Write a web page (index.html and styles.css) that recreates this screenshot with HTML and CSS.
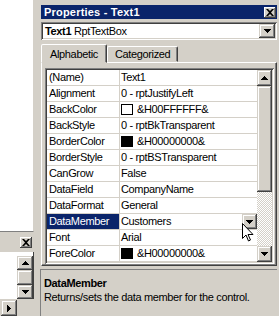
FILE: index.html
```html
<!DOCTYPE html>
<html lang="en">
<head>
    <meta charset="UTF-8">
    <title>Properties - Text1</title>
    <link rel="stylesheet" href="styles.css">
</head>
<body>
<div class="desk">
    <div class="side">
        <div class="side__pane"></div>
        <div class="side__bar">
            <span class="cap-btn">
                <svg width="8" height="7" viewBox="0 0 8 7"><path d="M0 0h2l2 2 2-2h2L5 3.5 8 7H6L4 5 2 7H0l3-3.5z"/></svg>
            </span>
        </div>
        <div class="side__list">
            <div class="side__white"></div>
            <div class="mini-scroll">
                <span class="sbtn sbtn--short">
                    <svg width="7" height="4" viewBox="0 0 7 4"><path d="M3 0h1v1h1v1h1v1h1v1H0V3h1V2h1V1h1z"/></svg>
                </span>
                <span class="sbtn sbtn--thumb"></span>
                <span class="sbtn sbtn--short">
                    <svg width="7" height="4" viewBox="0 0 7 4"><path d="M0 0h7v1H6v1H5v1H4v1H3V3H2V2H1V1H0z"/></svg>
                </span>
            </div>
        </div>
        <div class="side__foot">
            <span class="sbtn sbtn--side">
                <svg width="4" height="7" viewBox="0 0 4 7"><path d="M0 0h1v1h1v1h1v1h1v1H3v1H2v1H1v1H0z"/></svg>
            </span>
        </div>
    </div>

    <div class="props">
        <div class="props__title">
            <span>Properties - Text1</span>
            <span class="cap-btn">
                <svg width="8" height="7" viewBox="0 0 8 7"><path d="M0 0h2l2 2 2-2h2L5 3.5 8 7H6L4 5 2 7H0l3-3.5z"/></svg>
            </span>
        </div>

        <div class="props__combo">
            <span><b>Text1</b> RptTextBox</span>
            <span class="sbtn sbtn--drop">
                <svg width="7" height="4" viewBox="0 0 7 4"><path d="M0 0h7v1H6v1H5v1H4v1H3V3H2V2H1V1H0z"/></svg>
            </span>
        </div>

        <div class="props__tabs">
            <span class="tab is-active">Alphabetic</span>
            <span class="tab">Categorized</span>
        </div>

        <div class="props__page">
            <div class="grid">
                <div class="grid__rows">
                    <div class="row"><span class="row__name">(Name)</span><span class="row__value">Text1</span></div>
                    <div class="row"><span class="row__name">Alignment</span><span class="row__value">0 - rptJustifyLeft</span></div>
                    <div class="row"><span class="row__name">BackColor</span><span class="row__value"><i class="swatch"></i>&amp;H00FFFFFF&amp;</span></div>
                    <div class="row"><span class="row__name">BackStyle</span><span class="row__value">0 - rptBkTransparent</span></div>
                    <div class="row"><span class="row__name">BorderColor</span><span class="row__value"><i class="swatch swatch--black"></i>&amp;H00000000&amp;</span></div>
                    <div class="row"><span class="row__name">BorderStyle</span><span class="row__value">0 - rptBSTransparent</span></div>
                    <div class="row"><span class="row__name">CanGrow</span><span class="row__value">False</span></div>
                    <div class="row"><span class="row__name">DataField</span><span class="row__value">CompanyName</span></div>
                    <div class="row"><span class="row__name">DataFormat</span><span class="row__value">General</span></div>
                    <div class="row is-selected">
                        <span class="row__name">DataMember</span>
                        <span class="row__value">Customers
                            <span class="sbtn sbtn--cell">
                                <svg width="7" height="4" viewBox="0 0 7 4"><path d="M0 0h7v1H6v1H5v1H4v1H3V3H2V2H1V1H0z"/></svg>
                            </span>
                        </span>
                    </div>
                    <div class="row"><span class="row__name">Font</span><span class="row__value">Arial</span></div>
                    <div class="row"><span class="row__name">ForeColor</span><span class="row__value"><i class="swatch swatch--black"></i>&amp;H00000000&amp;</span></div>
                </div>
                <div class="grid__scroll">
                    <span class="sbtn sbtn--arrow">
                        <svg width="7" height="4" viewBox="0 0 7 4"><path d="M3 0h1v1h1v1h1v1h1v1H0V3h1V2h1V1h1z"/></svg>
                    </span>
                    <span class="sbtn sbtn--bar"></span>
                    <span class="grid__track"></span>
                    <span class="sbtn sbtn--arrow">
                        <svg width="7" height="4" viewBox="0 0 7 4"><path d="M0 0h7v1H6v1H5v1H4v1H3V3H2V2H1V1H0z"/></svg>
                    </span>
                </div>
            </div>
        </div>

        <div class="props__desc">
            <b>DataMember</b>
            <p>Returns/sets the data member for the control.</p>
        </div>
    </div>
</div>

<svg class="cursor" width="12" height="19" viewBox="0 0 12 19">
    <path d="M0.5 0.5v15l3.5-3.5 2.5 6 2-1-2.5-5.5h5z" fill="#fff" stroke="#000"/>
</svg>
</body>
</html>
```

FILE: styles.css
```css
* {
    box-sizing: border-box;
}

body {
    margin: 0;
    background: #d4d0c8;
    font-family: "Liberation Sans", Arial, sans-serif;
    font-size: 11px;
    letter-spacing: -0.35px;
    color: #000;
}

.desk {
    display: flex;
    width: 279px;
    height: 316px;
    overflow: hidden;
}

/* 3d buttons */

.sbtn {
    display: flex;
    align-items: center;
    justify-content: center;
    background: #d4d0c8;
    box-shadow: inset -1px -1px #404040, inset 1px 1px #d4d0c8, inset -2px -2px #808080, inset 2px 2px #fff;
}

.sbtn svg {
    display: block;
}

.cap-btn {
    display: flex;
    align-items: center;
    justify-content: center;
    width: 12px;
    height: 11px;
    background: #d4d0c8;
    box-shadow: inset -1px -1px #404040, inset 1px 1px #fff, inset -2px -2px #808080;
}

/* window behind, on the left */

.side {
    width: 34px;
    display: flex;
    flex-direction: column;
}

.side__pane {
    height: 233px;
    background: #fff;
    border-right: 1px solid #d4d0c8;
    border-bottom: 1px solid #808080;
}

.side__bar {
    height: 20px;
    display: flex;
    align-items: center;
    justify-content: flex-end;
    padding-right: 2px;
}

.side__list {
    flex: 1;
    display: flex;
    padding-top: 4px;
    background: #fff;
    border-right: 1px solid #404040;
}

.side__white {
    flex: 1;
}

.mini-scroll {
    width: 16px;
    display: flex;
    flex-direction: column;
}

.sbtn--short {
    height: 14px;
}

.sbtn--thumb {
    height: 15px;
}

.side__foot {
    height: 17px;
    display: flex;
    padding: 1px 0 0 1px;
}

.sbtn--side {
    width: 16px;
    height: 16px;
}

/* properties window */

.props {
    flex: 1;
    padding: 5px 2px 0 7px;
    display: flex;
    flex-direction: column;
}

.props__title {
    height: 14px;
    display: flex;
    align-items: center;
    justify-content: space-between;
    padding: 0 1px 0 3px;
    background: #0a246a;
    color: #fff;
    font-weight: bold;
    letter-spacing: 0.2px;
}

.props__combo {
    margin-top: 3px;
    height: 18px;
    display: flex;
    align-items: center;
    justify-content: space-between;
    padding: 0 2px 0 4px;
    background: #fff;
    box-shadow: inset 1px 1px #808080, inset -1px -1px #fff, inset 2px 2px #404040, inset -2px -2px #d4d0c8;
}

.sbtn--drop {
    width: 16px;
    height: 14px;
}

.props__tabs {
    margin-top: 3px;
    height: 19px;
    display: flex;
    align-items: flex-end;
}

.tab {
    height: 16px;
    padding: 0 7px;
    line-height: 14px;
    border: 1px solid;
    border-color: #fff #404040 transparent #fff;
    border-radius: 2px 2px 0 0;
    box-shadow: inset -1px 0 #808080;
}

.tab.is-active {
    position: relative;
    height: 19px;
    margin-bottom: -1px;
    padding: 2px 8px 0 8px;
    background: #d4d0c8;
    z-index: 1;
}

.props__page {
    height: 204px;
    padding: 5px 2px 1px 3px;
    border: 1px solid;
    border-color: #fff #404040 #404040 #fff;
    box-shadow: inset -1px -1px #808080;
}

.grid {
    display: flex;
    height: 196px;
    padding: 2px;
    background: #fff;
    box-shadow: inset 1px 1px #808080, inset -1px -1px #fff, inset 2px 2px #404040, inset -2px -2px #d4d0c8;
}

.grid__rows {
    flex: 1;
}

.row {
    display: flex;
    height: 16px;
    line-height: 15px;
    border-bottom: 1px solid #d4d0c8;
}

.row__name {
    width: 73px;
    padding-left: 2px;
    border-right: 1px solid #d4d0c8;
}

.row__value {
    flex: 1;
    display: flex;
    align-items: center;
    padding-left: 1px;
}

.row.is-selected .row__name {
    background: #0a246a;
    color: #fff;
}

.sbtn--cell {
    width: 15px;
    height: 15px;
    margin-left: auto;
}

.swatch {
    width: 12px;
    height: 11px;
    margin-right: 4px;
    border: 1px solid #000;
    background: #fff;
}

.swatch--black {
    background: #000;
}

.grid__scroll {
    width: 15px;
    display: flex;
    flex-direction: column;
}

.sbtn--arrow {
    height: 16px;
}

.sbtn--bar {
    height: 106px;
}

.grid__track {
    flex: 1;
    background-image: repeating-conic-gradient(#fff 0 25%, #d4d0c8 0 50%);
    background-size: 2px 2px;
}

.props__desc {
    flex: 1;
    margin: 3px 0 0 -1px;
    padding: 6px 0 0 3px;
    line-height: 14px;
    border-top: 1px solid #808080;
    border-left: 1px solid #808080;
}

.props__desc p {
    margin: 0;
}

/* mouse pointer over the dropdown */

.cursor {
    position: absolute;
    left: 242px;
    top: 223px;
}
```
